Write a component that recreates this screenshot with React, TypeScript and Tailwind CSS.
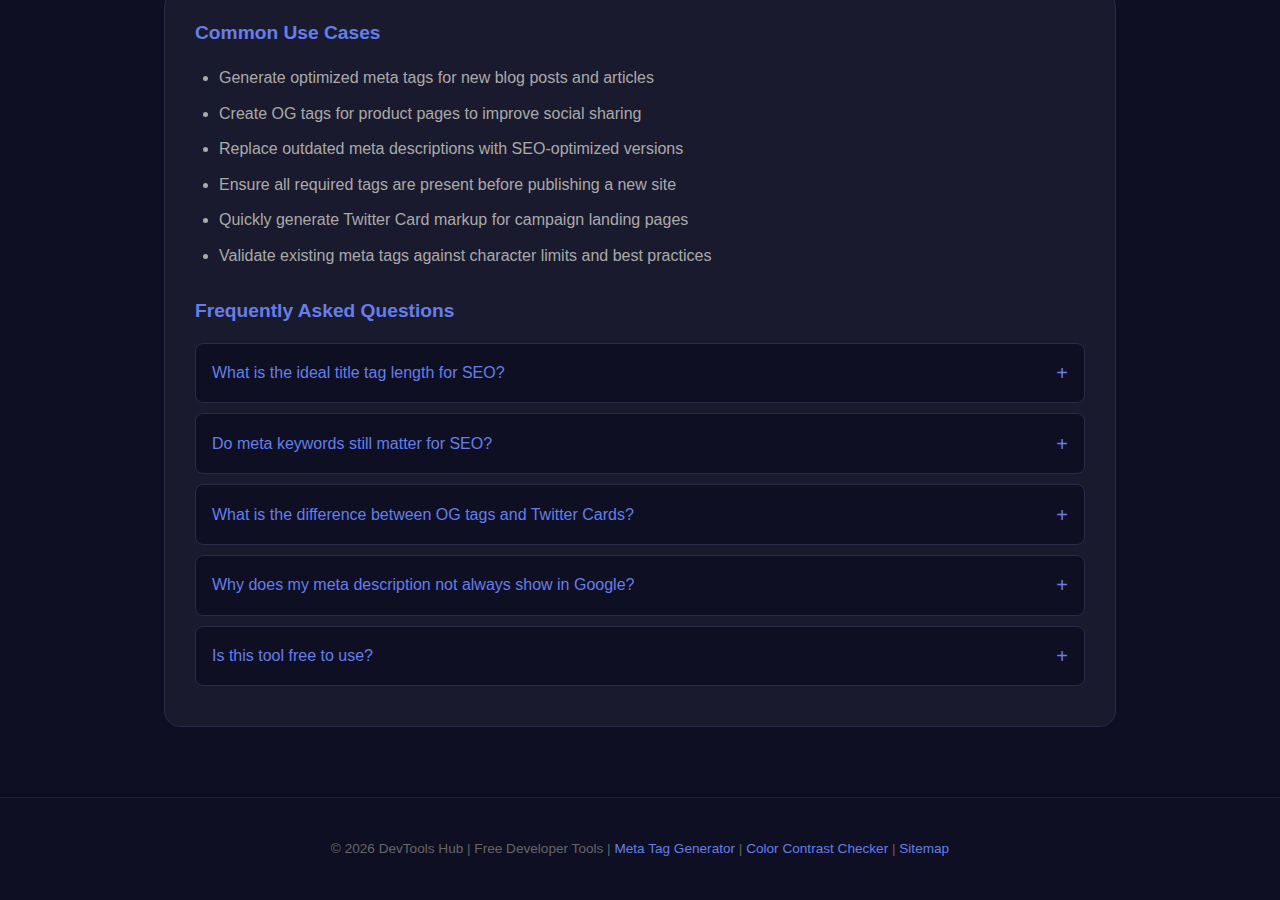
import { useState } from 'react'

const useCases = [
  'Generate optimized meta tags for new blog posts and articles',
  'Create OG tags for product pages to improve social sharing',
  'Replace outdated meta descriptions with SEO-optimized versions',
  'Ensure all required tags are present before publishing a new site',
  'Quickly generate Twitter Card markup for campaign landing pages',
  'Validate existing meta tags against character limits and best practices',
]

const faqs = [
  'What is the ideal title tag length for SEO?',
  'Do meta keywords still matter for SEO?',
  'What is the difference between OG tags and Twitter Cards?',
  'Why does my meta description not always show in Google?',
  'Is this tool free to use?',
]

export default function App() {
  const [open, setOpen] = useState<number | null>(null)

  return (
    <div className="bg-[#0f0f23] font-['Liberation_Sans',Arial,sans-serif] flex flex-col">
      <main className="flex justify-center">
        <section className="w-[952px] -mt-[9px] mb-[70px] self-start rounded-2xl border border-[#2a2a4a] bg-[#1a1a2e] p-[30px]">
          <h3 className="text-[19.2px] leading-[22px] font-bold text-[#667eea] mb-[21px]">Common Use Cases</h3>
          <ul className="list-disc pl-6 text-[16px] leading-[25.6px] text-[#aaaaaa] marker:text-[#aaaaaa]">
            {useCases.map(u => (
              <li key={u} className="mb-[10px]">{u}</li>
            ))}
          </ul>

          <h3 className="mt-[31px] mb-[21px] text-[19.2px] leading-[22px] font-bold text-[#667eea]">Frequently Asked Questions</h3>
          <div className="flex flex-col">
            {faqs.map((q, i) => (
              <div key={q} className="mb-[10px] rounded-lg border border-[#2a2a4a] bg-[#0f0f23]">
                <button
                  onClick={() => setOpen(open === i ? null : i)}
                  className="w-full flex items-center justify-between px-4 py-[17.4px] text-left text-[16px] leading-[24px] text-[#667eea]"
                >
                  <span>{q}</span>
                  <span className="text-[20px] leading-[24px] font-light">{open === i ? '−' : '+'}</span>
                </button>
                {open === i && (
                  <p className="px-4 pb-4 text-[15px] leading-[24px] text-[#aaaaaa]">
                    Answer coming soon.
                  </p>
                )}
              </div>
            ))}
          </div>
        </section>
      </main>

      <footer className="border-t border-[#1e1e38] pt-10 pb-[41px] text-center text-[13.6px] leading-[22px] text-[#666666]">
        © 2026 DevTools Hub | Free Developer Tools |{' '}
        <a href="#" className="text-[#667eea]">Meta Tag Generator</a> |{' '}
        <a href="#" className="text-[#667eea]">Color Contrast Checker</a> |{' '}
        <a href="#" className="text-[#667eea]">Sitemap</a>
      </footer>
    </div>
  )
}
